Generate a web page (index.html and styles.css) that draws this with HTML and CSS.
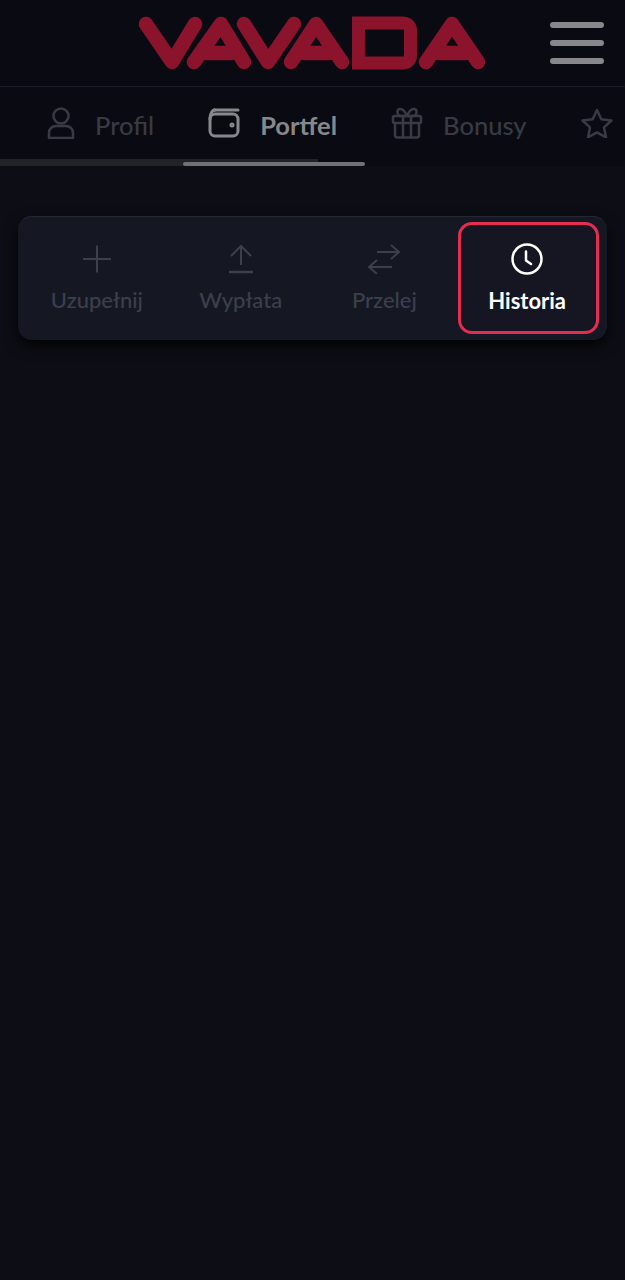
FILE: index.html
```html
<!DOCTYPE html>
<html lang="pl">
<head>
	<meta charset="UTF-8">
	<title>Portfel - Historia</title>
	<link rel="stylesheet" href="styles.css">
</head>
<body>
	<header class="topbar">
		<svg class="logo" width="350" height="60" viewBox="0 0 350 60" fill="none" stroke="#8b132c" stroke-width="14.5" stroke-linecap="round" stroke-linejoin="round">
			<polyline points="7,14 33,52 56,14"/>
			<path d="M55,52 L82,14 L105,52 M68,43 H92"/>
			<polyline points="105,14 129,52 155,14"/>
			<path d="M152,52 L177,14 L203,52 M165,43 H190"/>
			<path d="M219.500,13 H263 Q271.500,13 271.500,21 V45 Q271.500,53 263,53 H219.500 Z" stroke-width="13" stroke-linejoin="miter"/>
			<path d="M287,52 L313,14 L339,52 M300,43 H326"/>
		</svg>
		<button class="burger" type="button"><span></span><span></span><span></span></button>
	</header>

	<nav class="tabs">
		<a class="tab">
			<svg width="28" height="32" viewBox="0 0 28 32" fill="none" stroke="currentColor" stroke-width="2.500">
				<circle cx="14" cy="9" r="7.500"/>
				<path d="M2 31v-5c0-4 3-7 7-7h10c4 0 7 3 7 7v5z" stroke-linejoin="round"/>
			</svg>
			<span>Profil</span>
		</a>
		<a class="tab tab-active">
			<svg width="32" height="30" viewBox="0 0 32 30" fill="none" stroke="currentColor" stroke-width="3" stroke-linecap="round">
				<path d="M6 2h24"/>
				<rect x="2" y="6" width="28" height="22" rx="5"/>
				<path d="M2 11c0-5 2-9 5-9"/>
				<circle cx="24" cy="17" r="1" fill="currentColor"/>
			</svg>
			<span>Portfel</span>
		</a>
		<a class="tab">
			<svg width="32" height="32" viewBox="0 0 32 32" fill="none" stroke="currentColor" stroke-width="2.500" stroke-linejoin="round">
				<rect x="2" y="9" width="28" height="7" rx="1.500"/>
				<path d="M4 16v12c0 1.500 1 2.500 2.500 2.500h19c1.500 0 2.500-1 2.500-2.500V16"/>
				<path d="M12 9v21.500M20 9v21.500"/>
				<path d="M16 9c-2-5-5-7.500-7.500-7 -2.500.5-3 5 0 7zM16 9c2-5 5-7.500 7.500-7 2.500.5 3 5 0 7z"/>
			</svg>
			<span>Bonusy</span>
		</a>
		<a class="tab">
			<svg width="32" height="30" viewBox="0 0 32 30" fill="none" stroke="currentColor" stroke-width="2.500" stroke-linejoin="round">
				<path d="M16 2l4.300 9.300 10.200 1.200-7.500 6.900 2 10-9-5-9 5 2-10-7.500-6.900 10.200-1.200z"/>
			</svg>
		</a>
		<div class="scroll-thumb"></div>
		<div class="tab-line"></div>
	</nav>

	<main class="content">
		<section class="actions">
			<a class="action">
				<svg width="30" height="30" viewBox="0 0 30 30" fill="none" stroke="currentColor" stroke-width="2">
					<path d="M15 1.500v27M1 15h28"/>
				</svg>
				<span>Uzupełnij</span>
			</a>
			<a class="action">
				<svg width="30" height="30" viewBox="0 0 30 30" fill="none" stroke="currentColor" stroke-width="2">
					<path d="M15 21V2M5 12L15 2l10 10"/>
					<path d="M3 28h24" stroke-width="2.500"/>
				</svg>
				<span>Wypłata</span>
			</a>
			<a class="action">
				<svg width="34" height="30" viewBox="0 0 34 30" fill="none" stroke="currentColor" stroke-width="2">
					<path d="M10 8h22M24 1l8 7-8 7M25 23H2M10 16l-8 7 8 7"/>
				</svg>
				<span>Przelej</span>
			</a>
			<a class="action action-active">
				<svg width="32" height="32" viewBox="0 0 32 32" fill="none" stroke="currentColor" stroke-width="2.500">
					<circle cx="16" cy="16" r="14.500"/>
					<path d="M15 8.500v9l5 3.500" stroke-linecap="round" stroke-linejoin="round"/>
				</svg>
				<span>Historia</span>
			</a>
		</section>
	</main>
</body>
</html>
```

FILE: styles.css
```css
html, body {
	height: 100%;
}

body {
	margin: 0;
	background-color: #0d0e15;
	font-family: Lato, 'Noto Sans', sans-serif;
	overflow: hidden;
}

/* Barra superior */
.topbar {
	display: flex;
	align-items: center;
	height: 87px;
	padding-left: 139px;
	box-sizing: border-box;
	border-bottom: 1px solid #1d1e27;
	background-color: #0a0b12;
}

.logo {
	display: block;
	margin-top: -6px;
}

.burger {
	display: flex;
	flex-direction: column;
	gap: 11.500px;
	width: 54px;
	margin-left: 61px;
	padding: 0;
	border: none;
	background: none;
}

.burger span {
	height: 6.500px;
	border-radius: 4px;
	background-color: #88888c;
}

/* Pestanas */
.tabs {
	position: relative;
	display: flex;
	height: 79px;
	padding-left: 20px;
	overflow: hidden;
	background-color: #0a0b12;
}

.tab {
	display: flex;
	flex: none;
	gap: 20px;
	align-items: center;
	height: 72px;
	padding: 0 27px;
	color: #383a44;
	font-size: 25.500px;
	font-weight: 500;
}

.tab span {
	padding-top: 4px;
}

.tab-active {
	color: #87888c;
	font-weight: 700;
}

.scroll-thumb {
	position: absolute;
	left: 0;
	bottom: 0;
	width: 318px;
	height: 7px;
	background-color: #222328;
}

.tab-line {
	position: absolute;
	left: 183px;
	bottom: 0;
	width: 182px;
	height: 4px;
	border-radius: 2px;
	background-color: #707176;
}

/* Acciones */
.content {
	padding: 50px 18px 0;
}

.actions {
	display: grid;
	grid-template-columns: repeat(4, 1fr);
	height: 124px;
	padding: 5px 7px 6px;
	box-sizing: border-box;
	border-top: 1px solid #252833;
	border-radius: 14px;
	background-color: #151823;
	box-shadow: 0 6px 14px rgba(0, 0, 0, 0.8);
}

.action {
	display: flex;
	flex-direction: column;
	gap: 12px;
	align-items: center;
	justify-content: center;
	box-sizing: border-box;
	color: #3c3f4c;
	font-size: 22px;
	font-weight: 500;
}

.action-active {
	margin-left: 2px;
	margin-right: 1px;
	padding-right: 3px;
	border: 3px solid #e52d52;
	border-radius: 14px;
	background-color: #161623;
	color: #fff;
	font-weight: 700;
}
```
